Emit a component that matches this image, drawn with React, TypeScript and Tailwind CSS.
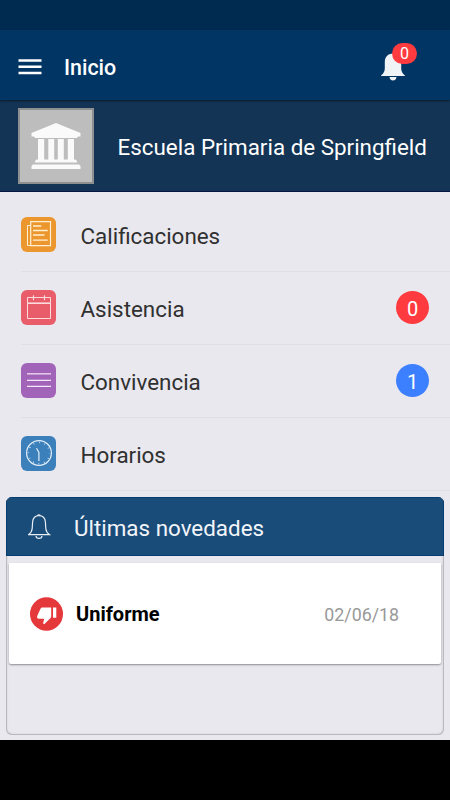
import type { ReactNode } from "react";

interface MenuRowProps {
  label: string;
  icon: ReactNode;
  badge?: number;
  badgeColor?: string;
}

function MenuIcon() {
  return (
    <svg width="24" height="18" viewBox="0 0 24 18" className="mt-1 shrink-0">
      <path d="M0.5 2.5H23.5M0.5 8.8H23.5M0.5 15H23.5" stroke="#fff" strokeWidth="2.6" />
    </svg>
  );
}

function BellSolid() {
  return (
    <svg width="24" height="28" viewBox="0 0 24 28" fill="#f0f4f7">
      <path d="M12 0.5C7 0.5 3.8 4 3.8 9V15.5C3.8 18.5 2.5 20.5 0.2 22.3V23H23.8V22.3C21.5 20.5 20.2 18.5 20.2 15.5V9C20.2 4 17 0.5 12 0.5Z" />
      <path d="M8.5 24H15.5C15.2 26.4 13.8 27.5 12 27.5S8.8 26.4 8.5 24Z" />
    </svg>
  );
}

function BellOutline() {
  return (
    <svg width="23" height="26" viewBox="0 0 23 26" fill="none" stroke="#e8eef5" strokeWidth="1.2">
      <path d="M0.5 20.7H21.5C19.5 19.3 18.1 17.8 17.8 14.5L17.4 8C17 3.7 14.7 1.7 11 1.7S5 3.7 4.6 8L4.2 14.5C3.9 17.8 2.5 19.3 0.5 20.7Z" />
      <path d="M9.7 1.8C9.7 0.5 12.3 0.5 12.3 1.8M8 22C8.2 25.3 13.8 25.3 14 22" />
    </svg>
  );
}

function SchoolIcon() {
  return (
    <svg width="50" height="47" viewBox="0 0 50 47" fill="#fafafa" className="mt-[2px]">
      <path d="M25 0L49.5 10V13.5H47L46 15H4L3 13.5H0.5V10Z" />
      <path d="M7 16H13.2V36.5H17.3V16H23.2V36.5H26.8V16H32.8V36.5H36.8V16H43V36.5H44.5L46 38V39.5H4V38L5.5 36.5H7Z" />
      <path d="M2 41.5H48L49.5 43V46H0.5V43Z" />
    </svg>
  );
}

function GradesIcon() {
  return (
    <svg width="35" height="35" viewBox="0 0 35 35" fill="none" stroke="#ffefd2">
      <rect width="35" height="35" rx="6" fill="#ec972d" stroke="none" />
      <path d="M9.7 4.7H29.5V28.7H9.7Z" strokeWidth="1.2" />
      <path d="M9.5 8.5H6.5V28.5H11" strokeWidth="1" />
      <path d="M12 9H20.3M12 13.5H26.7M12 18H23.5M12 23.2H26.7" strokeWidth="1.3" />
    </svg>
  );
}

function CalendarIcon() {
  return (
    <svg width="35" height="35" viewBox="0 0 35 35" fill="none" stroke="#ffdadd">
      <rect width="35" height="35" rx="6" fill="#e85d69" stroke="none" />
      <path d="M6.5 7.5H29.5V28.5H6.5Z" strokeWidth="1" />
      <path d="M6.5 13.2H29.5" strokeWidth="1.6" />
      <path d="M12.5 5.2V10.3M23.5 5.2V10.3" strokeWidth="1.2" />
    </svg>
  );
}

function LinesIcon() {
  return (
    <svg width="35" height="35" viewBox="0 0 35 35" fill="none" stroke="#f7e6fa">
      <rect width="35" height="35" rx="6" fill="#a264b8" stroke="none" />
      <path d="M6 10.8H30" strokeWidth="1.5" opacity=".8" />
      <path d="M6 17.4H30M6 23.4H30" strokeWidth="1.1" />
    </svg>
  );
}

function ClockIcon() {
  return (
    <svg width="35" height="35" viewBox="0 0 35 35" fill="none" stroke="#e3eff8">
      <rect width="35" height="35" rx="6" fill="#3b7fbb" stroke="none" />
      <circle cx="18" cy="17" r="12.4" strokeWidth="1.2" />
      <circle cx="18" cy="17" r="10.6" strokeWidth="1.5" strokeDasharray="0.7 4.85" strokeDashoffset="0.35" />
      <path d="M15.5 12.2L17.9 16.5V25" strokeWidth="1.2" />
    </svg>
  );
}

function ThumbDownIcon() {
  return (
    <svg width="33" height="34" viewBox="0 0 33 34">
      <ellipse cx="16.5" cy="17" rx="16.5" ry="16.7" fill="#e5383b" />
      <path
        d="M21.2 10.5H12.5C11.5 10.5 10.9 11 10.5 11.8L7.3 18.8C6.7 20.6 7.3 21.7 9 21.7H14.2L13.2 25.7C13.1 26.5 13.4 26.9 14.2 27.3L20.4 21.2C21 20.6 21.2 20.1 21.2 19.3ZM23 10.5H26.3V20.7H23Z"
        fill="#fff"
      />
    </svg>
  );
}

function MenuRow({ label, icon, badge, badgeColor }: MenuRowProps) {
  return (
    <li className="ml-[21px] flex h-[73px] items-center border-b border-[#dfdfe4] pr-[21px] pb-px">
      {icon}
      <span className="ml-[24.5px] flex-1 pt-[2px] text-[22.4px] leading-7 text-[#303030]">{label}</span>
      {badge !== undefined && (
        <span
          className={`flex size-[33px] items-center justify-center rounded-full pt-[2px] text-[20px] leading-none text-white ${badgeColor}`}
        >
          {badge}
        </span>
      )}
    </li>
  );
}

export default function App() {
  return (
    <div className="flex h-[800px] w-[450px] flex-col overflow-hidden bg-black font-[Roboto,sans-serif]">
      {/* Status bar */}
      <div className="h-[30px] shrink-0 bg-[#002b50]" />

      {/* App bar */}
      <header className="z-10 flex h-[70px] shrink-0 items-center bg-[#003564] pr-[45px] pl-[18px] shadow-[0_1px_2px_rgba(0,0,0,0.5)]">
        <MenuIcon />
        <h1 className="ml-[22px] flex-1 pt-[5px] text-[21.4px] leading-7 font-medium text-white">Inicio</h1>
        <div className="relative pt-1">
          <BellSolid />
          <span className="absolute -top-[6px] left-[11px] flex h-[21px] w-[25px] items-center justify-center rounded-full bg-[#ff3b3f] pt-px text-[16px] leading-none text-white">
            0
          </span>
        </div>
      </header>

      {/* School */}
      <section className="flex h-[92px] shrink-0 items-center border-b border-[#041542] bg-[#133454] pl-[18px]">
        <div className="flex size-[76px] items-center justify-center border-2 border-[#8d8f91] bg-[#bdbdbd]">
          <SchoolIcon />
        </div>
        <span className="ml-[23.5px] pt-[3px] text-[22.4px] leading-7 whitespace-nowrap text-white">
          Escuela Primaria de Springfield
        </span>
      </section>

      <main className="flex h-[548px] shrink-0 flex-col bg-[#e9e8ee] pt-[7px]">
        <ul>
          <MenuRow label="Calificaciones" icon={<GradesIcon />} />
          <MenuRow label="Asistencia" icon={<CalendarIcon />} badge={0} badgeColor="bg-[#ff3b3f]" />
          <MenuRow label="Convivencia" icon={<LinesIcon />} badge={1} badgeColor="bg-[#3d80ff]" />
          <MenuRow label="Horarios" icon={<ClockIcon />} />
        </ul>

        {/* News */}
        <section className="mx-[6px] mt-[6px] h-[238px] overflow-hidden rounded-[6px] bg-[#e9e8ee] shadow-[inset_0_0_0_1px_#b9b9bf,inset_0_0_2px_1px_#c8c8cd]">
          <div className="flex h-[59px] items-center border border-[#063d70] bg-[#1a4c79] pl-[21px]">
            <BellOutline />
            <h2 className="ml-[23px] pt-[2px] text-[22.4px] leading-7 text-[#f2f5f9]">Últimas novedades</h2>
          </div>
          <div className="mx-[3px] mt-[7px] flex h-[101px] items-center rounded-b-[2px] bg-white pr-[42px] pl-[21px] shadow-[0_1px_2px_rgba(0,0,0,0.4)]">
            <ThumbDownIcon />
            <span className="ml-[13px] flex-1 pt-px text-[20px] leading-6 font-bold text-black">Uniforme</span>
            <span className="pt-[2px] text-[17.8px] leading-6 text-[#999]">02/06/18</span>
          </div>
        </section>
      </main>
    </div>
  );
}
